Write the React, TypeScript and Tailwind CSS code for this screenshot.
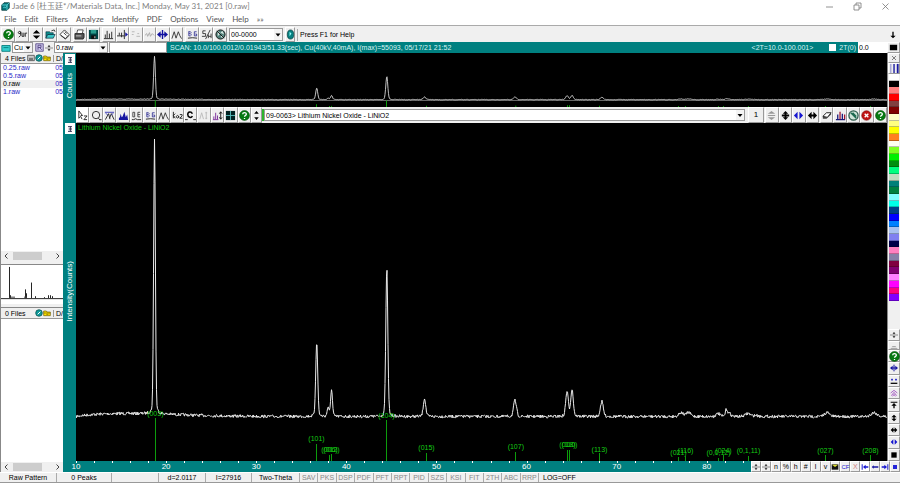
import React from 'react';

const UI = "font-['Liberation_Sans',sans-serif]";

/* ---------- diffraction data ---------- */

const PLOT_W = 811;

// position, height and width of each reflection, in plot units
const peaks = [
  { x: 78.5, h: 275, w: 1.2 },
  { x: 240.7, h: 74, w: 1.4 },
  { x: 252, h: 9, w: 1.2 },
  { x: 255.5, h: 27, w: 1.3 },
  { x: 310.8, h: 148, w: 1.4 },
  { x: 348.5, h: 18, w: 1.7 },
  { x: 439, h: 16, w: 2 },
  { x: 491, h: 25, w: 1.8 },
  { x: 496, h: 27, w: 1.8 },
  { x: 525.8, h: 15, w: 2 },
  { x: 605, h: 4, w: 3 },
  { x: 612.5, h: 4, w: 3 },
  { x: 642, h: 3, w: 2.5 },
  { x: 650.5, h: 7, w: 1.5 },
  { x: 653.5, h: 3, w: 2 },
  { x: 672, h: 3, w: 3.5 },
  { x: 680, h: 1, w: 3 },
  { x: 751, h: 4, w: 3.5 },
  { x: 798, h: 4, w: 4 },
];

const pdfLines = [
  { x: 79.3, h: 43, label: '(003)', y: 43 },
  { x: 240.5, h: 17, label: '(101)', y: 18 },
  { x: 253.5, h: 6, label: '(006)', y: 7 },
  { x: 255.5, h: 7, label: '(012)', y: 7 },
  { x: 310.5, h: 41, label: '(104)', y: 41 },
  { x: 350.5, h: 8, label: '(015)', y: 9 },
  { x: 439.8, h: 9, label: '(107)', y: 10 },
  { x: 491.5, h: 11, label: '(018)', y: 12 },
  { x: 493.5, h: 11, label: '(110)', y: 12 },
  { x: 523.5, h: 8, label: '(113)', y: 7 },
  { x: 602.5, h: 4, label: '(021)', y: 4 },
  { x: 609.5, h: 5, label: '(116)', y: 6 },
  { x: 642.5, h: 3, label: '(0,0,12)', y: 4 },
  { x: 647.5, h: 6, label: '(024)', y: 6 },
  { x: 672.5, h: 5, label: '(0,1,11)', y: 6 },
  { x: 749.5, h: 6, label: '(027)', y: 6 },
  { x: 794.5, h: 6, label: '(208)', y: 6 },
];

function intensity(x: number) {
  let sum = 0;
  for (const p of peaks) {
    const d = ((x - p.x) / p.w) ** 2;
    sum += p.h * (0.88 * Math.exp(-d) + 0.12 / (1 + d));
  }
  return sum;
}

function tracePath(base: number, scale: number, noise: number) {
  let seed = 7;
  const pts: string[] = [];
  for (let x = 0; x <= PLOT_W; x += 0.5) {
    seed = (seed * 16807) % 2147483647;
    const rnd = seed / 2147483647 - 0.5;
    const hump = 3 * Math.exp(-(((x - 50) / 75) ** 2)) - 2 * Math.exp(-x / 12);
    const y = base - (intensity(x) + hump) * scale + rnd * noise;
    pts.push(`${x} ${y.toFixed(2)}`);
  }
  return 'M' + pts.join('L');
}

const mainTrace = tracePath(293.5, 1, 3);
const overviewTrace = tracePath(46.6, 0.156, 0.5);

const pct = (x: number) => `${(x / PLOT_W) * 100}%`;

/* ---------- icons (12 x 12 grid) ---------- */

const icons: Record<string, React.ReactNode> = {
  help: (
    <>
      <circle cx="6" cy="6" r="5.4" fill="#067a12" stroke="#034a08" strokeWidth=".6" />
      <path d="M4 4.6C4 2.2 8 2.2 8 4.5C8 6 6 5.8 6 7.4M6 8.6V9.8" fill="none" stroke="#fff" strokeWidth="1.4" />
    </>
  ),
  scan: <path d="M4 4a1.3 1.3 0 1 0-2 1h2V3v4L2 9M5.5 4v4h2V4M9 8.500V4.500h2" fill="none" stroke="#222" />,
  updown: <path d="M6 1l4 4H2zM6 11L2 7h8z" />,
  open: (
    <>
      <path d="M1 3h4l1 1h3v2H3L1 10z" fill="#0b8a8a" stroke="#023" strokeWidth=".6" />
      <path d="M3 6h8l-2 4H1z" fill="#3cc6c6" stroke="#023" strokeWidth=".7" />
      <path d="M7 2l3-1 1 2" fill="none" stroke="#000" strokeWidth=".8" />
    </>
  ),
  diamond: (
    <>
      <path d="M1 6l5-5 5 5-4 4.500z" fill="#fff" stroke="#222" strokeWidth=".9" />
      <path d="M2 7l5 4 4-4M5 4l3 3M6.500 3l2 2" fill="none" stroke="#333" />
    </>
  ),
  print: (
    <>
      <path d="M3 5l1-4h6L9 5" fill="#fff" stroke="#222" strokeWidth=".8" />
      <path d="M1 5h10v4l-1 2H1z" fill="#555" stroke="#111" strokeWidth=".8" />
      <path d="M2 7.500h6" stroke="#ccc" />
    </>
  ),
  save: (
    <>
      <path d="M1 1h10v10H1z" fill="#044" />
      <path d="M3 1h6v4H3z" fill="#2a9d8d" />
      <path d="M3.500 7h5v4h-5z" fill="#111" />
      <path d="M7 8h1v2H7z" fill="#ddd" />
    </>
  ),
  bars: <path d="M1 10.500h10M2.500 10V6M4.500 10V2M7 10V5M9.500 10V3" fill="none" stroke="#222" />,
  barsEdit: (
    <>
      <path d="M0 7.500h8M2.500 7V4M5 9V4" fill="none" stroke="#222" />
      <path d="M8 11V1" stroke="#222" />
      <path d="M12 6L9 3.500v5z" fill="#1515a0" />
    </>
  ),
  dots: <path d="M2 3h3M2 6h2M7 8h4M8 5h2" fill="none" stroke="#b5b5b5" />,
  wave: <path d="M1 7l2-2 1 3 2-4 1 4 2-3 2 2" fill="none" stroke="#aaa" />,
  moveX: (
    <>
      <path d="M0 6l4-3.500v7zM12 6L8 2.500v7z" fill="#1010a0" />
      <path d="M6 1v10M3 6h6" stroke="#1010a0" strokeWidth="1.500" />
    </>
  ),
  twin: <path d="M1 10.500L3.500 3l2 7L8 3l1.500 4 2 3.500" fill="none" stroke="#333" />,
  bg: (
    <>
      <path d="M2 2.500v5M2 3h2M2 5h2M2 7.500h2M4.500 3.500v1M4.500 5.500v1.500M10.500 3H8v4.500h2.500V5.500H9" fill="none" stroke="#2a2a90" strokeWidth=".9" />
      <path d="M1 10l5-.5 5 .5" fill="none" stroke="#222" />
    </>
  ),
  sq: <path d="M5 2H2v3h3v3H1M10 1L5 11M8 6v4M11 5v5M8 8h3" fill="none" stroke="#333" />,
  globe: (
    <>
      <circle cx="6" cy="6" r="5" fill="#4d7f78" stroke="#111" />
      <path d="M3 2l3 3-3 3zM8 2l2 4-4-2zM6 8l3-1-1 3z" fill="#d5e5e0" />
      <path d="M2 2l8 8" stroke="#111" />
    </>
  ),
  gem: (
    <>
      <circle cx="6" cy="6" r="5" fill="#cfe3d8" stroke="#2a5a4a" strokeWidth="1.400" />
      <path d="M3 3l6 6M5 3l4 4" stroke="#1d6a50" strokeWidth="1.500" />
    </>
  ),
  drop: (
    <>
      <ellipse cx="6" cy="6" rx="3.500" ry="5" fill="#067f7f" stroke="#033" strokeWidth=".7" />
      <path d="M5 3v5l2-3z" fill="#9ff" />
    </>
  ),
  pin: <path d="M5 1h2v6h3l-4 4-4-4h3z" />,
  cursor: <path d="M2 1v8l2-2 1.500 3M2 1l4 5H4M7.500 6.500h3.500l-3.500 4H11" fill="none" stroke="#222" />,
  zoom: <path d="M9.500 5.500a4 4 0 1 1-8 0 4 4 0 0 1 8 0M8 9l2 2M9 10.500h2.500" fill="none" stroke="#222" />,
  fit: (
    <>
      <path d="M1 2.500h10" stroke="#3333b0" />
      <path d="M1.500 10.500L5 4l1.500 6M6 9l2-5 3 6.500" fill="none" stroke="#222" />
      <path d="M2 3.500l2 2M10 3.500l-2 2" stroke="#3333b0" />
    </>
  ),
  area: <path d="M1 11V9l1-1 1-4 1 4 1-1 2-5 1.500 6L10 5l1 6z" fill="#1515a0" />,
  curveA: (
    <>
      <path d="M2 2.500v5h2v-5zM7.500 7.500v-5H10M7.500 5H10M7.500 7.500H10" fill="none" stroke="#333" strokeWidth=".9" />
      <path d="M1 10.500h2l2-1 2 1h4" fill="none" stroke="#222" />
    </>
  ),
  ka2: <path d="M1.500 2v7M1.500 6l2-2M1.500 6l2 3M7 6.500a1.300 1.300 0 1 1-2 0 1.300 1.300 0 0 1 2 0l.5 2M8.500 5h2.500v1.500L8.500 9H11.500" fill="none" stroke="#222" />,
  c: (
    <>
      <path d="M8 4C7 1.500 3 1.500 3 5S7 9 8 6.500" fill="none" stroke="#000" strokeWidth="1.600" />
      <path d="M0 10.500h3M9 10.500h3" stroke="#222" />
    </>
  ),
  aFade: <path d="M2 10L4 3l2 7M9 2v8M8 3h2M8 9h2" fill="none" stroke="#bbb" />,
  arrows: (
    <>
      <path d="M1 10.500h6M2 10V7M4 10V3M6 10V6" fill="none" stroke="#7a2a9a" />
      <path d="M9.500 2v8M8 4l1.500-2L11 4M8 8l1.500 2L11 8" fill="none" stroke="#111" />
    </>
  ),
  grid: (
    <>
      <path d="M1 1h10v10H1z" fill="#022" />
      <path d="M6 1v10M1 6h10" stroke="#5bb" />
    </>
  ),
  mini: <path d="M6 1l2.500 3h-5zM6 11L3.500 8h5z" />,
  stackGray: <path d="M6 1l4 3H2zM2 5.500h8v1H2zM6 11l4-3H2z" fill="#999" />,
  stack: <path d="M6 1l3 3H7v1h3v2H7v1h2l-3 3-3-3h2V7H2V5h3V4H3z" />,
  splitBlue: <path d="M5 2v8L1 6zM7 2v8l4-4z" fill="#1515d0" />,
  wide: <path d="M1 6l4-4v3h2V2l4 4-4 4V7H5v3z" />,
  eraser: (
    <>
      <path d="M2 7l4-4h5L7 8z" fill="#fff" stroke="#111" />
      <path d="M2 7v2.500h4L11 5V3L7 8z" fill="#444" />
    </>
  ),
  chart: (
    <>
      <path d="M1 10.500h10M3 10V5M8 10V4" fill="none" stroke="#1a1a7a" strokeWidth="1.400" />
      <path d="M5.500 10V2M10.500 10V5" fill="none" stroke="#a01530" strokeWidth="1.400" />
    </>
  ),
  stop: (
    <>
      <circle cx="6" cy="6" r="5.200" fill="#c01515" stroke="#700" strokeWidth=".6" />
      <path d="M4 4l4 4M8 4L4 8" stroke="#fff" strokeWidth="1.500" />
    </>
  ),
  screen: <path d="M2 3h8v6H2z" />,
  close: <path d="M3 3l6 6M9 3L3 9" stroke="#444" />,
  lines: (
    <>
      <path d="M2 1v10" stroke="#8080c8" />
      <path d="M5.500 1v10" stroke="#1a1aa0" strokeWidth="1.500" />
      <path d="M9.500 1v10" stroke="#1a1aa0" strokeWidth="2" />
    </>
  ),
  flat: (
    <>
      <path d="M1 9.500h10" stroke="#111" strokeWidth="2" />
      <path d="M1.500 4h3M7.500 4h3M3 2.500v3M9 2.500v3" stroke="#1515c0" strokeWidth="1.300" />
    </>
  ),
  peak: <path d="M1 6l5-4 5 4M2 10l4-5 4 5M4 11l2-3 2 3" fill="none" stroke="#a050c0" strokeWidth="1.300" />,
  up: <path d="M1 1h10v1.500H1zM6 3l4 4H7v4H5V7H2z" />,
  vert: <path d="M6 1l4 4H7v2h3l-4 4-4-4h3V5H2z" />,
  square: <path d="M2 2h8v8H2z" />,
  toLeft: <path d="M1 2h1.500v8H1zM3 6l4-3.500V5h4v2H7v2.500z" fill="#1515d0" />,
  dash: <path d="M1 6l3-2.500V5h7v2H4v1.500z" fill="#1515a0" />,
  toRight: <path d="M9.500 2H11v8H9.500zM9 6L5 2.500V5H1v2h4v2.500z" fill="#1515d0" />,
  hash: <path d="M3 3h6v6H3z" fill="#2525d8" />,
  spin: <path d="M0 6h12M6 2l1.500 2h-3zM6 10L4.500 8h3z" stroke="#333" strokeWidth=".8" />,
  book: (
    <>
      <path d="M1 2h10v8H1z" fill="#111" />
      <path d="M2 3l4 3 4-3v-.5H2z" fill="#dd3" />
    </>
  ),
  tray: <path d="M1 9h10v2H1zM2 8l2-2h4l2 2z" fill="#aaa" />,
  folder: <path d="M1 3h4l1 1.500h5V10H1zM1 6h10M5 8h3" fill="#ffe600" stroke="#665500" />,
  disk: (
    <>
      <path d="M1 2h10v8H1z" fill="#ccc" stroke="#333" />
      <path d="M3 6.500h6M3 8.500h6" stroke="#333" />
    </>
  ),
  check: (
    <>
      <circle cx="6" cy="6" r="5" fill="#0d9a9a" stroke="#044" />
      <path d="M4 8l4-4" stroke="#fff" strokeWidth="1.500" />
    </>
  ),
  panel: <path d="M1 3h10v7H1zM3 5.500h6" fill="#3cc" stroke="#077" />,
  doc: <path d="M1 1h10v10H1zM4 9V3h4v3H4M6 6l3 3" fill="#c9c3e8" stroke="#4a3a7a" />,
  tag: <path d="M3 2.500h6M6.500 2v8M4 6h5M3 9.500h6" fill="none" stroke="#335" strokeWidth="1.500" />,
};

function Icon({ name, className = 'size-3' }: { name: string; className?: string }) {
  return (
    <svg viewBox="0 0 12 12" className={`${className} shrink-0`} aria-hidden="true">
      {icons[name]}
    </svg>
  );
}

function ToolButton({ icon, pressed }: { icon: string; pressed?: boolean }) {
  return (
    <button
      type="button"
      aria-label={icon}
      className={`flex h-full min-w-0 flex-1 items-center justify-center border border-t-white border-l-white border-r-[#9a9a9a] border-b-[#9a9a9a] ${
        pressed ? 'bg-white' : 'bg-[#efefef]'
      }`}
    >
      <Icon name={icon} className="size-[11px]" />
    </button>
  );
}

// Small variant for the colour column and the strip under the axis
function SmallButton({ icon, pressed }: { icon: string; pressed?: boolean }) {
  return (
    <button
      type="button"
      aria-label={icon}
      className={`flex min-w-0 flex-1 items-center justify-center border border-t-white border-l-white border-r-[#9a9a9a] border-b-[#9a9a9a] ${
        pressed ? 'bg-white' : 'bg-[#efefef]'
      }`}
    >
      <Icon name={icon} className="size-2" />
    </button>
  );
}

function Group({ names, className }: { names: string[]; className: string }) {
  return (
    <div className={`flex h-full shrink-0 ${className}`}>
      {names.map((n, i) => (
        <ToolButton key={n + i} icon={n} pressed={n === 'cursor'} />
      ))}
    </div>
  );
}

function Combo({ label, value, className }: { label: string; value: string; className: string }) {
  return (
    <div className={`relative h-full border border-[#999] bg-white ${className}`}>
      <select aria-label={label} className="block h-full w-full appearance-none bg-white pl-px text-[7px] leading-none text-black">
        <option>{value}</option>
      </select>
      <svg viewBox="0 0 8 8" className="pointer-events-none absolute top-0 right-0 h-full w-2 bg-[#f4f4f4]" aria-hidden="true">
        <path d="M1.500 3h5L4 6z" />
      </svg>
    </div>
  );
}

/* ---------- left panel ---------- */

function FilesHeader({ title, names }: { title: string; names: string[] }) {
  return (
    <div className="flex h-[11px] shrink-0 items-center border-b border-[#999] bg-[#efefef] pl-1 leading-none">
      <span className="flex-1 whitespace-nowrap">{title}</span>
      {names.map((n) => (
        <Icon key={n} name={n} className="size-2" />
      ))}
      <span className="ml-0.5 w-2.5 overflow-hidden border-l border-[#999] pl-0.5 whitespace-nowrap">D/</span>
    </div>
  );
}

function ScrollBar() {
  return (
    <div className="flex h-[10px] shrink-0 items-center gap-1 bg-[#f0f0f0] px-0.5 text-[#444]">
      <svg viewBox="0 0 6 8" className="h-2 w-1.5" aria-hidden="true">
        <path d="M4.500 1.500L2 4l2.500 2.500" fill="none" stroke="currentColor" />
      </svg>
      <div className="h-2 w-[29px] bg-[#cdcdcd]" />
      <svg viewBox="0 0 6 8" className="ml-auto h-2 w-1.5" aria-hidden="true">
        <path d="M1.500 1.500L4 4 1.500 6.500" fill="none" stroke="currentColor" />
      </svg>
    </div>
  );
}

const files = ['0.25.raw', '0.5.raw', '0.raw', '1.raw'];

function LeftPanel() {
  return (
    <aside className="flex w-[63px] shrink-0 flex-col border-l border-[#888] bg-[#f0f0f0] text-[7px]">
      <FilesHeader title="4 Files" names={['disk', 'check', 'folder']} />
      <ul className="h-[187px] bg-white leading-[8px]">
        {files.map((f) => (
          <li
            key={f}
            className={`flex h-2 justify-between overflow-hidden pl-0.5 ${
              f === '0.raw' ? 'bg-[#f0f0f0] text-black' : 'text-[#2a1fc8]'
            }`}
          >
            <span>{f}</span>
            <span className="text-[#2a1fc8]">05</span>
          </li>
        ))}
      </ul>
      <ScrollBar />
      <svg viewBox="0 0 62 40" preserveAspectRatio="none" className="mt-[3px] h-10 w-full border-t border-[#888] bg-white" aria-hidden="true">
        <path
          d="M0 34.500h62M8.500 34V2M9.500 34v-3M24.500 34V25M25.500 34v-5M30.500 34V18M34.500 34v-2M43.500 34v-1M47.500 34v-3M49.500 34v-3M51.500 34v-2"
          fill="none"
          stroke="#222"
        />
        <path d="M8 33h6M23 33h3" stroke="#444" />
      </svg>
      <div className="mt-[3px] flex min-h-[163px] flex-1 flex-col border-t border-[#888]">
        <FilesHeader title="0 Files" names={['check', 'folder']} />
        <div className="flex-1 bg-white" />
        <ScrollBar />
      </div>
    </aside>
  );
}

/* ---------- plots ---------- */

function AxisStrip({ label, className }: { label: string; className: string }) {
  return (
    <div className={`flex w-[13px] shrink-0 flex-col items-center bg-[#008080] ${className}`}>
      <button type="button" aria-label={`${label} scale`} className="flex h-[11px] w-[10px] shrink-0 items-center justify-center bg-white">
        <Icon name="tag" className="size-2" />
      </button>
      <div className="flex flex-1 items-center justify-center">
        <span className="rotate-180 text-[8px] leading-none whitespace-nowrap text-white [writing-mode:vertical-rl]">{label}</span>
      </div>
    </div>
  );
}

function Overview() {
  return (
    <div className="relative h-[54px] flex-1 overflow-hidden bg-black">
      <svg viewBox="0 0 811 54" preserveAspectRatio="none" className="absolute inset-0 h-full w-full">
        <path d="M0 47.500H811" stroke="#666" />
        <path d={overviewTrace} fill="none" stroke="#d8d8d8" strokeWidth=".9" />
        {pdfLines.map((l) => (
          <path key={l.label} d={`M${l.x} 54V${54 - Math.max(1, l.h * 0.16)}`} stroke="#0a9a0a" />
        ))}
      </svg>
    </div>
  );
}

function MainPlot() {
  return (
    <div className="relative min-h-[338px] flex-1 overflow-hidden bg-black">
      <svg viewBox="0 0 811 338" preserveAspectRatio="none" className="absolute inset-0 h-full w-full">
        <path d={mainTrace} fill="none" stroke="#ececec" />
      </svg>
      <p className="relative pl-0.5 text-[7px] leading-[9px] text-[#12c412]">Lithium Nickel Oxide - LiNiO2</p>
      {pdfLines.map((l) => (
        <React.Fragment key={l.label}>
          <span className="absolute bottom-0 w-px bg-[#0c9c0c]" style={{ left: pct(l.x - 0.5), height: l.h }} />
          <span
            className="absolute -translate-x-1/2 text-[7px] leading-[9px] whitespace-nowrap text-[#14cc14]"
            style={{ left: pct(l.x), bottom: l.y }}
          >
            {l.label}
          </span>
        </React.Fragment>
      ))}
    </div>
  );
}

const degrees = [10, 20, 30, 40, 50, 60, 70, 80];
const ticks = Array.from({ length: 38 }, (_, i) => 10 + i * 2);

function BottomAxis() {
  return (
    <div className="relative flex h-[11px] shrink-0 bg-[#008080] px-[13px]">
      <div className="relative flex-1">
        {ticks.map((t) => (
          <span key={t} className="absolute top-0 h-0.5 w-px bg-white" style={{ left: `${((t - 10) / 90) * 100}%` }} />
        ))}
        {degrees.map((d) => (
          <span
            key={d}
            className="absolute top-px -translate-x-1/2 text-[8px] leading-[9px] text-white"
            style={{ left: `${((d - 10) / 90) * 100}%` }}
          >
            {d}
          </span>
        ))}
      </div>
      <div className="absolute top-0 right-0 flex h-full w-[149px] bg-[#efefef] text-[7px] leading-none">
        <SmallButton icon="spin" />
        <SmallButton icon="spin" />
        {['n', '%', 'h', '#', 'l', 'v'].map((t) => (
          <button key={t} type="button" className="min-w-0 flex-1 border border-t-white border-l-white border-r-[#9a9a9a] border-b-[#9a9a9a]">
            {t}
          </button>
        ))}
        <SmallButton icon="book" />
        <button type="button" className="flex min-w-0 flex-1 items-center justify-center border border-white border-r-[#9a9a9a] border-b-[#9a9a9a] text-[6px] text-[#2020d0]">
          CF
        </button>
        <button type="button" className="min-w-0 flex-1 border border-white border-r-[#9a9a9a] border-b-[#9a9a9a] text-[#d08080]">
          X
        </button>
        <SmallButton icon="toLeft" pressed />
        <SmallButton icon="dash" />
        <SmallButton icon="toRight" />
        <SmallButton icon="hash" />
      </div>
    </div>
  );
}

/* ---------- colour palette ---------- */

const swatches = [
  'bg-white', 'bg-black', 'bg-[#ff8080]', 'bg-[#ff0000]', 'bg-[#804040]', 'bg-[#800000]', 'bg-[#ffffc8]',
  'bg-[#ffff80]', 'bg-[#ffff00]', 'bg-[#ff8020]', 'bg-[#fffff0]', 'bg-[#80ff20]', 'bg-[#00f000]', 'bg-[#009010]',
  'bg-[#00ff80]', 'bg-[#c0dcc0]', 'bg-[#008078]', 'bg-[#008040]', 'bg-[#80ffff]', 'bg-[#00ffe8]', 'bg-[#004088]',
  'bg-[#0000ff]', 'bg-[#0080ff]', 'bg-[#a8c0f0]', 'bg-[#8080f0]', 'bg-[#000048]', 'bg-[#ff80c0]', 'bg-[#8880a8]',
  'bg-[#800040]', 'bg-[#800070]', 'bg-[#ff80ff]', 'bg-[#ff00ff]', 'bg-[#ff0080]', 'bg-[#8000ff]',
];

const sideTools = ['help', 'moveX', 'flat', 'peak', 'up', 'vert', 'wide', 'splitBlue', 'square'];

function Palette() {
  return (
    <div className="flex w-[13px] shrink-0 flex-col border-l border-[#888] bg-[#f0f0f0]">
      <div className="flex h-[10px] shrink-0">
        <SmallButton icon="close" />
      </div>
      <div className="flex h-[11px] shrink-0">
        <ToolButton icon="lines" />
      </div>
      <div className="flex h-[227px] shrink-0 flex-col px-px">
        {swatches.map((s) => (
          <button key={s} type="button" aria-label={`Colour ${s.slice(3)}`} className={`min-h-0 flex-1 border-b border-black/25 ${s}`} />
        ))}
      </div>
      <div className="min-h-[28px] flex-1" />
      <div className="flex h-3 shrink-0">
        <SmallButton icon="spin" />
      </div>
      <div className="flex h-[9px] shrink-0">
        <SmallButton icon="tray" />
      </div>
      <div className="flex h-[111px] shrink-0 flex-col">
        {sideTools.map((t) => (
          <div key={t} className="flex min-h-0 flex-1">
            {t === 'help' ? <ToolButton icon={t} /> : <SmallButton icon={t} />}
          </div>
        ))}
      </div>
    </div>
  );
}

/* ---------- status bar ---------- */

const flags = ['SAV', 'PKS', 'DSP', 'PDF', 'PFT', 'RPT', 'PID', 'SZS', 'KSI', 'FIT', '2TH', 'ABC', 'RRP'];

function StatusBar() {
  const cell = 'shrink-0 border-r border-[#aaa] text-center';
  return (
    <footer className="flex h-[11px] shrink-0 border-t border-b border-t-white border-b-[#999] bg-[#f0f0f0] text-[7px] leading-[9px] whitespace-nowrap">
      <span className={`${cell} w-[57px]`}>Raw Pattern</span>
      <span className={`${cell} w-[55px]`}>0 Peaks</span>
      <span className={`${cell} w-[47px]`} />
      <span className={`${cell} w-[47px]`}>d=2.0117</span>
      <span className={`${cell} w-[46px]`}>I=27916</span>
      <span className={`${cell} w-[48px]`}>Two-Theta</span>
      <div className="flex w-[239px] shrink-0 text-[#888]">
        {flags.map((f) => (
          <span key={f} className="flex-1 border-r border-[#aaa] text-center">
            {f}
          </span>
        ))}
      </div>
      <span className="pl-1">LOG=OFF</span>
    </footer>
  );
}

const menus = ['File', 'Edit', 'Filters', 'Analyze', 'Identify', 'PDF', 'Options', 'View', 'Help', '»»'];

const App: React.FC = () => {
  return (
    <div className={`flex min-h-screen w-full flex-col bg-[#f0f0f0] text-black ${UI}`}>
      {/* Title bar */}
      <header className="flex h-[13px] shrink-0 items-center bg-white pl-px font-['Lato','Noto_Sans_CJK_SC',sans-serif] text-[8px] text-[#808080]">
        <svg viewBox="0 0 12 12" className="size-[9px]" aria-hidden="true">
          <path d="M1 4l3-3h7v7l-3 3H1z" fill="#067a80" stroke="#033" />
          <path d="M1 4h7v7M8 4l3-3M3 8c2-3 3 2 5-3" fill="none" stroke="#6fe0e0" />
        </svg>
        <h1 className="ml-0.5 flex-1 leading-[13px] whitespace-nowrap">
          Jade 6 [杜玉廷*/Materials Data, Inc.] Monday, May 31, 2021 [0.raw]
        </h1>
        <div className="flex gap-[19px] pr-[10px] text-[#777]">
          {['M1 5h7', 'M1 3h5v5H1zM3 3V1h5v5H6', 'M1.500 1.500l6 6M7.500 1.500l-6 6'].map((d, i) => (
            <button key={d} type="button" aria-label={['Minimize', 'Restore', 'Close'][i]}>
              <svg viewBox="0 0 9 9" className="size-[9px]">
                <path d={d} fill="none" stroke="currentColor" strokeWidth=".8" />
              </svg>
            </button>
          ))}
        </div>
      </header>

      <nav className="flex h-[13px] shrink-0 gap-2 border-b border-[#aaa] bg-white pl-1 font-['Lato',sans-serif] text-[8px] leading-[12px] text-[#555]">
        {menus.map((m) => (
          <button key={m} type="button">
            {m}
          </button>
        ))}
      </nav>

      {/* Main toolbar */}
      <div className="flex h-4 shrink-0 items-center pt-px pl-px">
        <Group names={['help', 'scan', 'updown', 'open', 'diamond']} className="w-[70px]" />
        <Group names={['print', 'save']} className="ml-0.5 w-[27px]" />
        <Group names={['bars', 'barsEdit', 'dots', 'wave', 'moveX', 'twin']} className="ml-0.5 w-[81px]" />
        <Group names={['bg', 'sq', 'globe']} className="ml-0.5 w-[42px]" />
        <div className="ml-0.5 h-[13px]">
          <Combo label="PDF number" value="00-0000" className="w-[54px]" />
        </div>
        <Group names={['drop']} className="ml-0.5 w-[10px]" />
        <span className="ml-0.5 border-l border-[#aaa] pl-0.5 text-[7px] leading-[12px]">Press F1 for Help</span>
        <Icon name="pin" className="mr-[3px] ml-auto size-2" />
      </div>

      {/* Scan line */}
      <div className="flex h-[11px] shrink-0 items-center text-[7px]">
        <Icon name="panel" className="mx-px size-[10px]" />
        <Combo label="Anode" value="Cu" className="w-[21px]" />
        <Icon name="doc" className="ml-0.5 size-[9px]" />
        <Icon name="spin" className="mx-px size-2" />
        <Combo label="Raw file" value="0.raw" className="w-[54px]" />
        <input aria-label="Filter" className="ml-px h-full w-[58px] border border-[#999] bg-white" />
        <div className="flex h-full min-w-0 flex-1 items-center bg-[#008080] pl-[3px] text-[#d8f4f4]">
          <span className="flex-1 leading-[10px] whitespace-nowrap">
            SCAN: 10.0/100.0012/0.01943/51.33(sec), Cu(40kV,40mA), I(max)=55093, 05/17/21 21:52
          </span>
          <span className="leading-[10px] whitespace-nowrap">&lt;2T=10.0-100.001&gt;</span>
          <label className="ml-4 flex items-center gap-[3px] leading-[10px] whitespace-nowrap">
            <input type="checkbox" className="size-[7px] appearance-none bg-white" />
            2T(0)
          </label>
          <input aria-label="Two-theta offset" defaultValue="0.0" className="ml-0.5 h-full w-[29px] bg-white pl-px text-black" />
        </div>
        <Group names={['screen']} className="w-[13px]" />
      </div>

      <div className="flex flex-1">
        <LeftPanel />
        <main className="flex min-w-0 flex-1 flex-col">
          <div className="flex flex-1">
            <div className="flex min-w-0 flex-1 flex-col">
              <div className="flex shrink-0">
                <AxisStrip label="Counts" className="h-[54px] pt-px" />
                <Overview />
              </div>
              <div className="flex h-4 shrink-0 bg-[#efefef]">
                <div className="w-[13px] shrink-0 bg-[#008080]" />
                <Group
                  names={['cursor', 'zoom', 'fit', 'area', 'curveA', 'bg', 'twin', 'ka2', 'c', 'aFade', 'arrows', 'grid', 'help']}
                  className="w-[175px]"
                />
                <Group names={['mini']} className="w-[11px]" />
                <div className="my-0.5 w-0.5 bg-[#2db52d]" />
                <div className="my-0.5 flex-1">
                  <Combo label="Phase" value="09-0063> Lithium Nickel Oxide - LiNiO2" className="w-full" />
                </div>
                <button type="button" className="ml-[3px] w-4 border border-white border-r-[#9a9a9a] border-b-[#9a9a9a] text-[8px]">
                  1
                </button>
                <Group names={['stackGray', 'stack', 'splitBlue', 'wide']} className="ml-px w-[54px]" />
                <Group names={['eraser', 'chart', 'gem', 'stop', 'help']} className="ml-px w-[67px]" />
              </div>
              <div className="flex flex-1">
                <AxisStrip label="Intensity(Counts)" className="pb-3" />
                <MainPlot />
              </div>
            </div>
            <Palette />
          </div>
          <BottomAxis />
        </main>
      </div>

      <StatusBar />
    </div>
  );
};

export default App;
